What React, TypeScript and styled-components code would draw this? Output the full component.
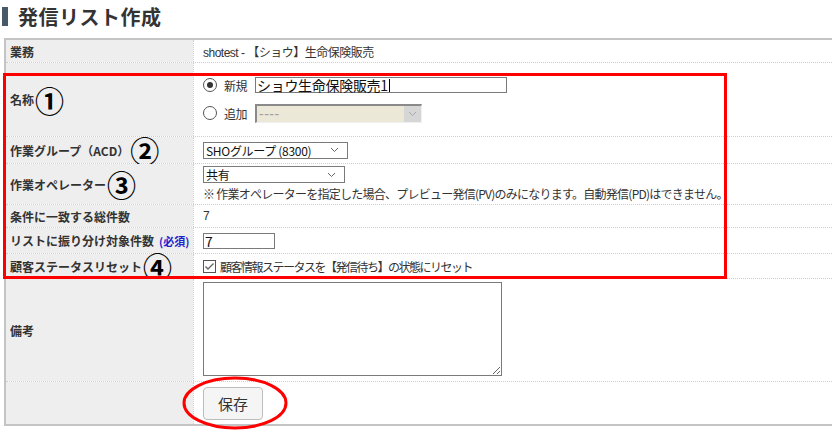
import styled, { createGlobalStyle } from "styled-components";

const GlobalStyle = createGlobalStyle`
  html, body {
    margin: 0;
    padding: 0;
    background: #fff;
  }
  body {
    font-family: "Liberation Sans", "Noto Sans CJK JP", sans-serif;
    color: #333;
  }
`;

const Page = styled.div`
  position: relative;
  width: 832px;
  height: 431px;
  padding: 7px 0 0 2px;
  box-sizing: border-box;
  overflow: hidden;
`;

const Title = styled.h1`
  margin: 0 0 12px;
  height: 19px;
  border-left: 6px solid #465a6c;
  padding-left: 10px;
  display: flex;
  align-items: center;
  font-family: "Noto Sans CJK JP", sans-serif;
  font-size: 20px;
  font-weight: 700;
  color: #333;
  letter-spacing: 0.5px;
`;

const FormTable = styled.div`
  margin-left: 2px;
  border-top: 2px solid #c4c4c4;
  border-bottom: 2px solid #c4c4c4;
  border-left: 2px solid #c4c4c4;
`;

const Row = styled.div<{ $h: number }>`
  display: grid;
  grid-template-columns: 187px 1fr;
  height: ${(p) => p.$h}px;
  box-sizing: border-box;
  border-bottom: 1px dotted #cfcfcf;
  &:last-child {
    border-bottom: none;
  }
`;

const Label = styled.div`
  background: #eeeeee;
  padding-left: 4px;
  display: flex;
  align-items: center;
  font-family: "Noto Sans CJK JP", sans-serif;
  font-size: 12px;
  font-weight: 700;
  color: #333;
  white-space: nowrap;
  overflow: visible;
`;

const Value = styled.div<{ $col?: boolean }>`
  border-left: 1px dotted #cfcfcf;
  padding-left: 9px;
  display: flex;
  flex-direction: ${(p) => (p.$col ? "column" : "row")};
  justify-content: ${(p) => (p.$col ? "center" : "flex-start")};
  align-items: ${(p) => (p.$col ? "flex-start" : "center")};
  font-size: 12px;
  letter-spacing: -0.5px;
  color: #333;
  white-space: nowrap;
`;

const Mark = styled.span`
  font-family: "Noto Sans CJK JP", sans-serif;
  font-size: 29px;
  font-weight: 700;
  color: #000;
  margin-left: 1px;
  line-height: 20px;
  height: 20px;
  display: inline-flex;
  align-items: center;
`;

const Required = styled.span`
  font-size: 11px;
  font-weight: 700;
  color: #1f1fcc;
  margin-left: 5px;
`;

const OptionLine = styled.div`
  display: flex;
  align-items: center;
  gap: 7px;
`;

const Radio = styled.span<{ $on?: boolean }>`
  width: 12px;
  height: 12px;
  border: 1px solid #555;
  border-radius: 50%;
  background: #fff;
  display: inline-flex;
  align-items: center;
  justify-content: center;
  &::after {
    content: "";
    width: 6px;
    height: 6px;
    border-radius: 50%;
    background: ${(p) => (p.$on ? "#333" : "transparent")};
  }
`;

const OptionText = styled.span`
  font-family: "Noto Sans CJK JP", sans-serif;
  font-size: 12px;
  margin-right: 1px;
`;

const TextBox = styled.div<{ $w: number }>`
  width: ${(p) => p.$w}px;
  height: 16px;
  box-sizing: border-box;
  border: 1px solid #7a7a7a;
  background: #fff;
  display: flex;
  align-items: center;
  padding-left: 1px;
  font-family: "Noto Sans CJK JP", sans-serif;
  font-size: 14px;
  color: #111;
  letter-spacing: -0.3px;
`;

const Caret = styled.span`
  width: 1px;
  height: 13px;
  background: #000;
  margin-left: 1px;
`;

const DisabledSelect = styled.div`
  width: 167px;
  height: 19px;
  box-sizing: border-box;
  border-top: 2px solid #8a8a8a;
  border-left: 2px solid #8a8a8a;
  border-right: 1px solid #f0f0f0;
  border-bottom: 1px solid #f0f0f0;
  background: #ebe8d8;
  display: flex;
  align-items: center;
  justify-content: space-between;
  font-size: 14px;
  letter-spacing: 0.5px;
  color: #a0a0a0;
  padding-left: 2px;
`;

const DisabledArrow = styled.span`
  width: 17px;
  height: 100%;
  background: #d6d6d6;
  display: flex;
  align-items: center;
  justify-content: center;
`;

const Select = styled.div<{ $w: number }>`
  width: ${(p) => p.$w}px;
  height: 17px;
  box-sizing: border-box;
  border: 1px solid #7a7a7a;
  background: #fff;
  display: flex;
  align-items: center;
  justify-content: space-between;
  padding: 0 8px 0 2px;
  font-family: "Noto Sans CJK JP", sans-serif;
  font-size: 12px;
  color: #111;
  letter-spacing: -0.3px;
`;

const Note = styled.div`
  margin-top: 2px;
  font-family: "Noto Sans CJK JP", sans-serif;
  font-size: 12px;
  letter-spacing: -0.75px;
`;

const CheckLine = styled.label`
  display: flex;
  align-items: center;
  gap: 4px;
  font-family: "Noto Sans CJK JP", sans-serif;
  font-size: 12px;
  letter-spacing: -1.5px;
`;

const Memo = styled.textarea`
  width: 299px;
  height: 94px;
  box-sizing: border-box;
  border: 1px solid #7a7a7a;
  margin: 3px 0 0;
  align-self: flex-start;
  font-size: 12px;
`;

const SaveButton = styled.button`
  width: 60px;
  height: 33px;
  background: #f5f5f5;
  border: 1px solid #bdbdbd;
  border-radius: 4px;
  font-family: "Noto Sans CJK JP", sans-serif;
  font-size: 15px;
  color: #333;
  padding: 0;
`;

const RedBox = styled.div`
  position: absolute;
  left: 3px;
  top: 73px;
  width: 724px;
  height: 206px;
  box-sizing: border-box;
  border: 3px solid #ff0000;
  pointer-events: none;
`;

const RedRing = styled.svg`
  position: absolute;
  left: 182px;
  top: 375px;
  pointer-events: none;
`;

function Chevron({ color = "#666" }: { color?: string }) {
  return (
    <svg width="9" height="6" viewBox="0 0 9 6">
      <path d="M1 1 L4.5 4.5 L8 1" fill="none" stroke={color} strokeWidth="1" />
    </svg>
  );
}

function CheckIcon() {
  return (
    <svg width="13" height="13" viewBox="0 0 13 13">
      <rect x="0.5" y="0.5" width="12" height="12" fill="#fff" stroke="#555" />
      <path d="M2.5 6.5 L5 9 L10.5 3.5" fill="none" stroke="#666" strokeWidth="1.4" />
    </svg>
  );
}

export default function App() {
  return (
    <>
      <GlobalStyle />
      <Page>
        <Title>発信リスト作成</Title>
        <FormTable>
          <Row $h={23}>
            <Label>業務</Label>
            <Value>shotest - 【ショウ】生命保険販売</Value>
          </Row>
          <Row $h={74}>
            <Label>
              名称<Mark>①</Mark>
            </Label>
            <Value $col style={{ gap: 10 }}>
              <OptionLine>
                <Radio $on />
                <OptionText>新規</OptionText>
                <TextBox $w={252}>
                  ショウ生命保険販売1<Caret />
                </TextBox>
              </OptionLine>
              <OptionLine>
                <Radio />
                <OptionText>追加</OptionText>
                <DisabledSelect>
                  ----
                  <DisabledArrow>
                    <Chevron color="#a8a8a8" />
                  </DisabledArrow>
                </DisabledSelect>
              </OptionLine>
            </Value>
          </Row>
          <Row $h={27}>
            <Label>
              作業グループ（ACD）<Mark>②</Mark>
            </Label>
            <Value>
              <Select $w={145}>
                SHOグループ (8300)
                <Chevron />
              </Select>
            </Value>
          </Row>
          <Row $h={41}>
            <Label>
              作業オペレーター<Mark>③</Mark>
            </Label>
            <Value $col>
              <Select $w={142}>
                共有
                <Chevron />
              </Select>
              <Note>
                ※ 作業オペレーターを指定した場合、プレビュー発信(PV)のみになります。自動発信(PD)はできません。
              </Note>
            </Value>
          </Row>
          <Row $h={23}>
            <Label>条件に一致する総件数</Label>
            <Value>7</Value>
          </Row>
          <Row $h={26}>
            <Label>
              リストに振り分け対象件数<Required>(必須)</Required>
            </Label>
            <Value>
              <TextBox $w={72}>7</TextBox>
            </Value>
          </Row>
          <Row $h={25}>
            <Label>
              顧客ステータスリセット<Mark>④</Mark>
            </Label>
            <Value>
              <CheckLine>
                <CheckIcon />
                顧客情報ステータスを【発信待ち】の状態にリセット
              </CheckLine>
            </Value>
          </Row>
          <Row $h={103}>
            <Label>備考</Label>
            <Value>
              <Memo />
            </Value>
          </Row>
          <Row $h={42}>
            <Label />
            <Value>
              <SaveButton>保存</SaveButton>
            </Value>
          </Row>
        </FormTable>
        <RedBox />
        <RedRing width="106" height="56" viewBox="0 0 106 56">
          <ellipse cx="53" cy="28" rx="51" ry="25" fill="none" stroke="#ff0000" strokeWidth="3" />
        </RedRing>
      </Page>
    </>
  );
}
